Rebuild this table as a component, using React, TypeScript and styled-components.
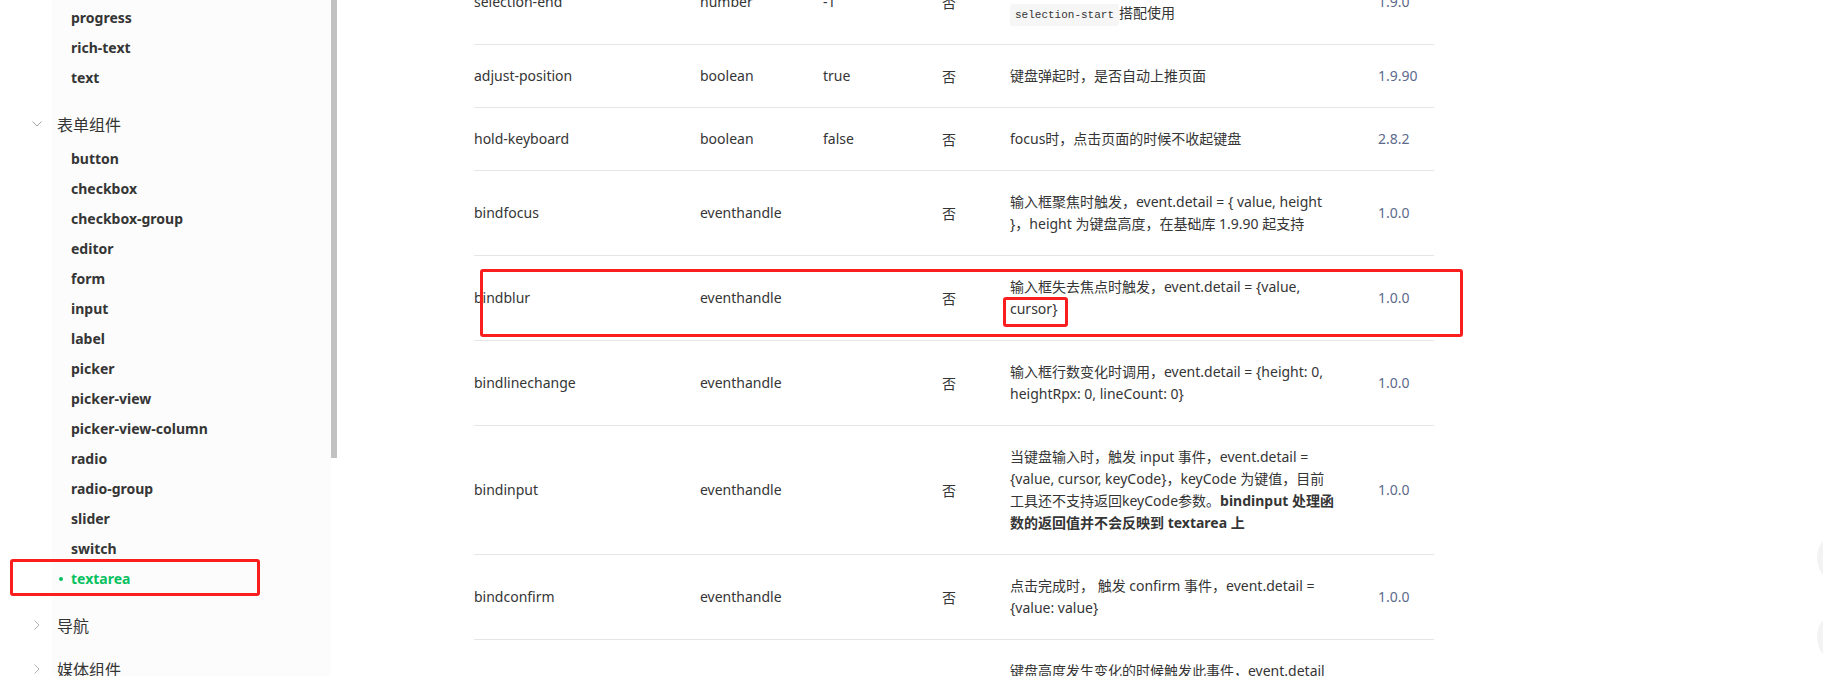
import React from "react";
import styled, { createGlobalStyle, css } from "styled-components";

const GlobalStyle = createGlobalStyle`
  html, body {
    margin: 0;
    padding: 0;
    background: #ffffff;
    overflow: hidden;
  }
  body {
    font-family: "Noto Sans", "Noto Sans CJK SC", sans-serif;
    color: #353535;
    -webkit-font-smoothing: antialiased;
  }
  * { box-sizing: border-box; }
`;

const Page = styled.div`
  position: relative;
  display: flex;
  width: 1823px;
  height: 676px;
  overflow: hidden;
  background: #ffffff;
`;

/* ---------- Sidebar ---------- */

const Sidebar = styled.aside`
  display: flex;
  flex: 0 0 337px;
  height: 100%;
`;

const Nav = styled.nav`
  width: 331px;
  height: 100%;
  overflow: hidden;
  background: linear-gradient(to right, #ffffff 52px, #fcfcfc 52px);
`;

const NavList = styled.div`
  display: flex;
  flex-direction: column;
  gap: 6px;
  margin-top: -28px;
`;

const Group = styled.div`
  display: flex;
  flex-direction: column;
`;

const GroupTitle = styled.div`
  display: flex;
  align-items: center;
  height: 38px;
  padding-left: 32px;
  font-family: "Noto Sans CJK SC", "Noto Sans", sans-serif;
  font-size: 16px;
  color: #353535;
`;

const Chevron = styled.span<{ $open?: boolean }>`
  display: flex;
  align-items: center;
  width: 25px;
  padding-left: ${(p) => (p.$open ? "0" : "2px")};
`;

const Items = styled.div`
  display: flex;
  flex-direction: column;
  padding-bottom: 7px;
`;

const Item = styled.div<{ $active?: boolean }>`
  position: relative;
  display: flex;
  align-items: center;
  height: 30px;
  padding-left: 71px;
  font-size: 14px;
  font-weight: 700;
  color: #353535;
  ${(p) =>
    p.$active &&
    css`
      color: #07c160;
      &::before {
        content: "";
        position: absolute;
        left: 59px;
        top: 14px;
        width: 4px;
        height: 4px;
        border-radius: 50%;
        background: #07c160;
      }
    `}
`;

const Mark = styled.span`
  position: absolute;
  border: 3px solid #fa1e1e;
  border-radius: 3px;
  pointer-events: none;
`;

const ItemMark = styled(Mark)`
  left: 10px;
  top: -4px;
  width: 250px;
  height: 37px;
`;

const ScrollTrack = styled.div`
  width: 6px;
  height: 100%;
`;

const Thumb = styled.div`
  width: 6px;
  height: 458px;
  background: #c1c1c1;
`;

/* ---------- Main table ---------- */

const Main = styled.main`
  flex: 1;
  padding-left: 137px;
  overflow: hidden;
`;

const Table = styled.div`
  display: flex;
  flex-direction: column;
  width: 960px;
  margin-top: -40px;
`;

const Row = styled.div`
  position: relative;
  display: grid;
  grid-template-columns: 226px 123px 119px 68px 368px 56px;
  align-items: center;
  padding: 20px 0;
  border-bottom: 1px solid #e6e6e6;
  font-size: 14px;
  line-height: 22px;
`;

const Cell = styled.div`
  height: 22px;
  font-size: 14px;
  color: #353535;
  white-space: nowrap;
`;

const Required = styled(Cell)`
  font-family: "Noto Sans CJK SC", sans-serif;
`;

const Desc = styled.div`
  color: #353535;
  white-space: nowrap;
`;

const Line = styled.span`
  display: block;
  height: 22px;
`;

const Strong = styled.b`
  font-weight: 700;
`;

const Code = styled.code`
  font-family: "Liberation Mono", "DejaVu Sans Mono", monospace;
  font-size: 11px;
  padding: 5px 5px;
  background: #f6f6f6;
  border-radius: 3px;
  color: #353535;
`;

const Version = styled(Cell)`
  color: #5c6a8c;
`;

const RowMark = styled(Mark)`
  left: 6px;
  top: 13px;
  width: 983px;
  height: 68px;
`;

const Marked = styled.span`
  position: relative;
  display: inline-block;
`;

const WordMark = styled(Mark)`
  left: -7px;
  top: -1px;
  width: 65px;
  height: 30px;
`;

/* ---------- Floating buttons ---------- */

const FloatStack = styled.div`
  position: absolute;
  right: -50px;
  top: 530px;
  display: flex;
  flex-direction: column;
  gap: 23px;
`;

const FloatButton = styled.div`
  width: 56px;
  height: 56px;
  border-radius: 50%;
  background: #f3f3f3;
`;

/* ---------- Icons ---------- */

const ChevronDown = () => (
  <svg width="10" height="6" viewBox="0 0 10 6" fill="none">
    <polyline points="0.5,0.5 5,5 9.5,0.5" stroke="#a3a3a3" strokeWidth="1" />
  </svg>
);

const ChevronRight = () => (
  <svg width="6" height="10" viewBox="0 0 6 10" fill="none">
    <polyline points="0.5,0.5 5,5 0.5,9.5" stroke="#b3b3b3" strokeWidth="1" />
  </svg>
);

/* ---------- Data ---------- */

const formItems = [
  "button",
  "checkbox",
  "checkbox-group",
  "editor",
  "form",
  "input",
  "label",
  "picker",
  "picker-view",
  "picker-view-column",
  "radio",
  "radio-group",
  "slider",
  "switch",
  "textarea",
];

const collapsedGroups = ["导航", "媒体组件", "地图", "画布"];

type RowData = {
  name: string;
  type: string;
  def: string;
  desc: React.ReactNode;
  version: string;
  mark?: boolean;
};

const rows: RowData[] = [
  {
    name: "selection-end",
    type: "number",
    def: "-1",
    desc: (
      <>
        <Line>光标结束位置，自动聚集时有效，需与</Line>
        <Line>
          <Code>selection-start</Code>搭配使用
        </Line>
      </>
    ),
    version: "1.9.0",
  },
  {
    name: "adjust-position",
    type: "boolean",
    def: "true",
    desc: <Line>键盘弹起时，是否自动上推页面</Line>,
    version: "1.9.90",
  },
  {
    name: "hold-keyboard",
    type: "boolean",
    def: "false",
    desc: <Line>focus时，点击页面的时候不收起键盘</Line>,
    version: "2.8.2",
  },
  {
    name: "bindfocus",
    type: "eventhandle",
    def: "",
    desc: (
      <>
        <Line>输入框聚焦时触发，event.detail = {"{"} value, height</Line>
        <Line>{"}"}，height 为键盘高度，在基础库 1.9.90 起支持</Line>
      </>
    ),
    version: "1.0.0",
  },
  {
    name: "bindblur",
    type: "eventhandle",
    def: "",
    desc: (
      <>
        <Line>输入框失去焦点时触发，event.detail = {"{"}value,</Line>
        <Line>
          <Marked>
            cursor{"}"}
            <WordMark />
          </Marked>
        </Line>
      </>
    ),
    version: "1.0.0",
    mark: true,
  },
  {
    name: "bindlinechange",
    type: "eventhandle",
    def: "",
    desc: (
      <>
        <Line>输入框行数变化时调用，event.detail = {"{"}height: 0,</Line>
        <Line>heightRpx: 0, lineCount: 0{"}"}</Line>
      </>
    ),
    version: "1.0.0",
  },
  {
    name: "bindinput",
    type: "eventhandle",
    def: "",
    desc: (
      <>
        <Line>当键盘输入时，触发 input 事件，event.detail =</Line>
        <Line>{"{"}value, cursor, keyCode{"}"}，keyCode 为键值，目前</Line>
        <Line>
          工具还不支持返回keyCode参数。<Strong>bindinput 处理函</Strong>
        </Line>
        <Line>
          <Strong>数的返回值并不会反映到 textarea 上</Strong>
        </Line>
      </>
    ),
    version: "1.0.0",
  },
  {
    name: "bindconfirm",
    type: "eventhandle",
    def: "",
    desc: (
      <>
        <Line>点击完成时， 触发 confirm 事件，event.detail =</Line>
        <Line>{"{"}value: value{"}"}</Line>
      </>
    ),
    version: "1.0.0",
  },
  {
    name: "bindkeyboardheightchange",
    type: "eventhandle",
    def: "",
    desc: (
      <>
        <Line>键盘高度发生变化的时候触发此事件，event.detail</Line>
        <Line>= {"{"}height: height, duration: duration{"}"}</Line>
      </>
    ),
    version: "2.7.0",
  },
];

export default function App() {
  return (
    <>
      <GlobalStyle />
      <Page>
        <Sidebar>
          <Nav>
            <NavList>
              <Group>
                <Items>
                  {["icon", "progress", "rich-text", "text"].map((t) => (
                    <Item key={t}>{t}</Item>
                  ))}
                </Items>
              </Group>
              <Group>
                <GroupTitle>
                  <Chevron $open>
                    <ChevronDown />
                  </Chevron>
                  表单组件
                </GroupTitle>
                <Items>
                  {formItems.map((t) =>
                    t === "textarea" ? (
                      <Item key={t} $active>
                        {t}
                        <ItemMark />
                      </Item>
                    ) : (
                      <Item key={t}>{t}</Item>
                    )
                  )}
                </Items>
              </Group>
              {collapsedGroups.map((g) => (
                <Group key={g}>
                  <GroupTitle>
                    <Chevron>
                      <ChevronRight />
                    </Chevron>
                    {g}
                  </GroupTitle>
                </Group>
              ))}
            </NavList>
          </Nav>
          <ScrollTrack>
            <Thumb />
          </ScrollTrack>
        </Sidebar>
        <Main>
          <Table>
            {rows.map((r) => (
              <Row key={r.name}>
                <Cell>{r.name}</Cell>
                <Cell>{r.type}</Cell>
                <Cell>{r.def}</Cell>
                <Required>否</Required>
                <Desc>{r.desc}</Desc>
                <Version>{r.version}</Version>
                {r.mark && <RowMark />}
              </Row>
            ))}
          </Table>
        </Main>
        <FloatStack>
          <FloatButton />
          <FloatButton />
        </FloatStack>
      </Page>
    </>
  );
}
